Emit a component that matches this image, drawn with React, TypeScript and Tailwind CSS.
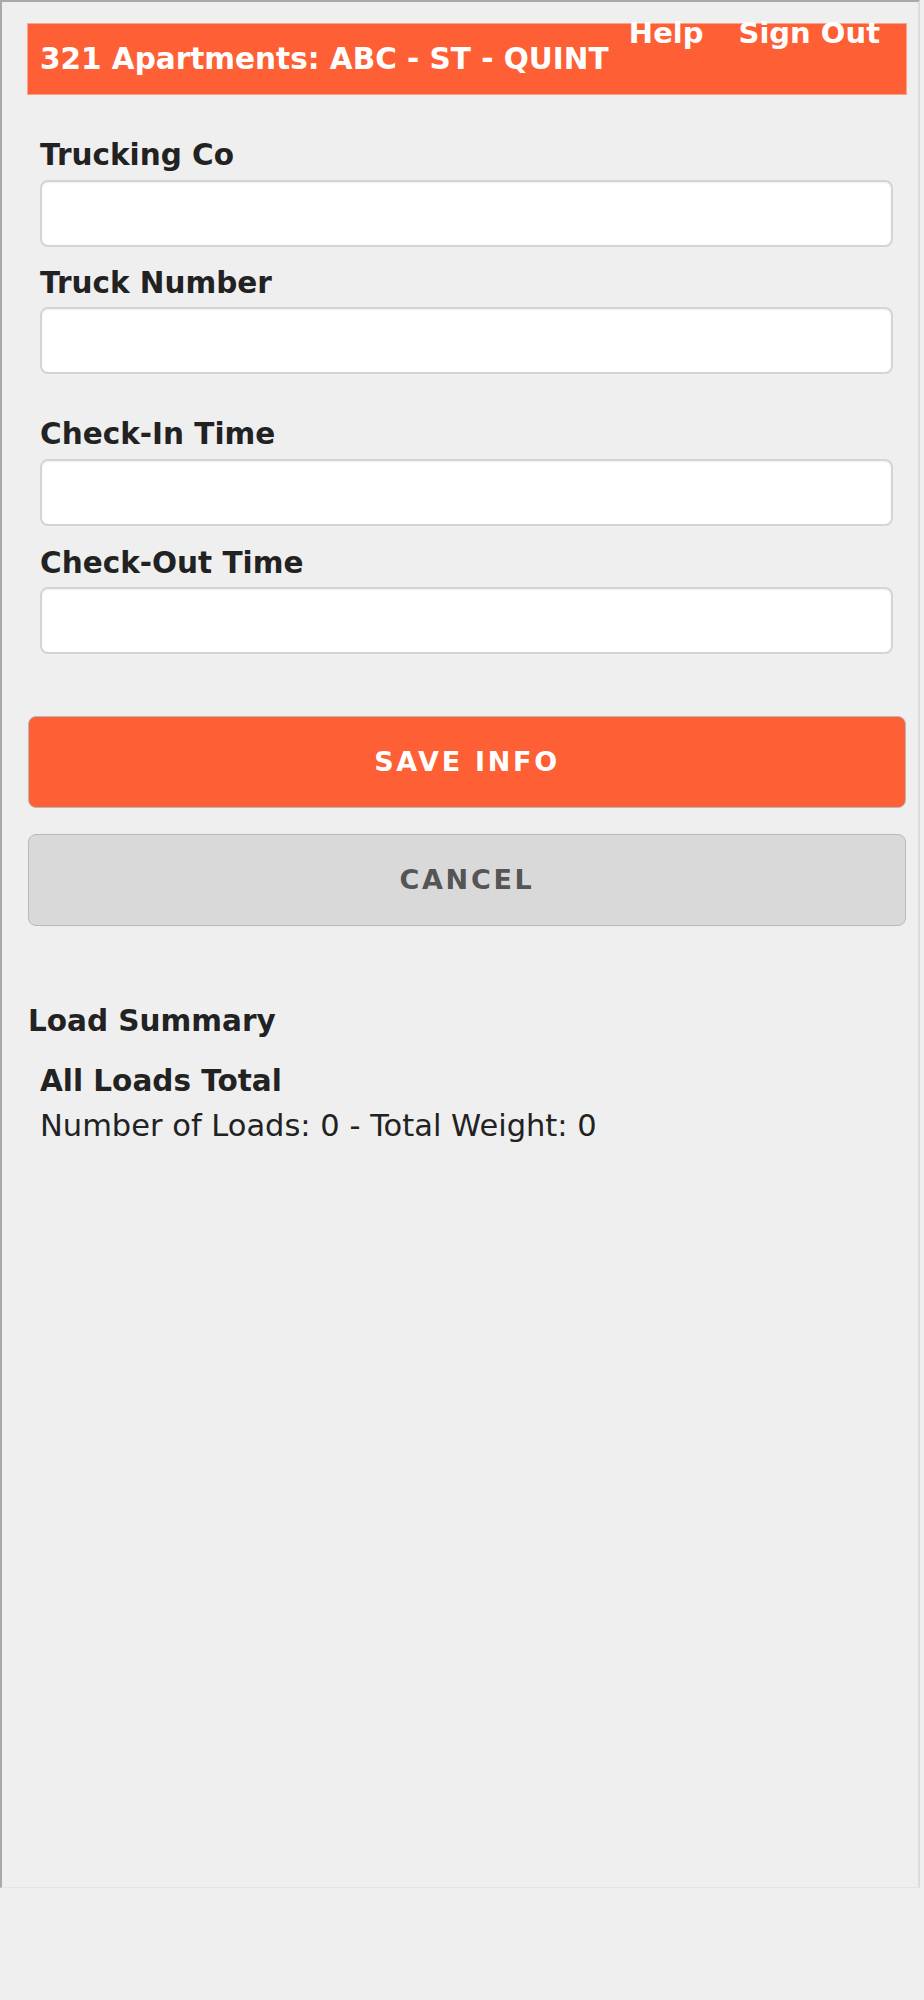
import React from "react";

const font = { fontFamily: '"DejaVu Sans", Verdana, sans-serif' };

function Field({ label, mt }: { label: string; mt: string }) {
  return (
    <div className={`flex flex-col ${mt}`}>
      <div className="text-[29.5px] leading-none font-bold text-[#222222]">{label}</div>
      <div className="mt-[9px] h-[67px] w-[853px] rounded-[8px] border-2 border-[#d4d4d4] bg-white shadow-[inset_0_1px_2px_rgba(0,0,0,0.06)]" />
    </div>
  );
}

export default function App() {
  return (
    <div className="min-h-[2000px] w-[924px] bg-[#efefef]" style={font}>
      <div className="h-[1888px] w-[920px] border-l-2 border-t-2 border-r-2 border-b border-l-[#a9a9a9] border-t-[#a9a9a9] border-r-[#dcdcdc] border-b-[#e4e4e4] bg-[#efefef]">
        <div className="relative ml-[25px] mt-[21px] h-[72px] w-[880px] border border-[#f7a58c] bg-[#ff5f35]">
          <div className="pl-[12px] pt-[21px] text-[29.5px] leading-none font-bold text-white">
            321 Apartments: ABC - ST - QUINT
          </div>
          <div className="absolute right-[26px] top-[-5px] flex gap-[35px] text-[29px] leading-none font-bold text-white">
            <span>Help</span>
            <span>Sign Out</span>
          </div>
        </div>

        <div className="ml-[38px] flex flex-col">
          <Field label="Trucking Co" mt="mt-[46px]" />
          <Field label="Truck Number" mt="mt-[22px]" />
          <Field label="Check-In Time" mt="mt-[46px]" />
          <Field label="Check-Out Time" mt="mt-[23px]" />
        </div>

        <div className="ml-[26px] mt-[62px] flex w-[878px] flex-col">
          <div className="flex h-[92px] items-center justify-center rounded-[8px] border-[1.5px] border-[#b9b9b9] bg-[#ff5f35] text-[27px] font-bold tracking-[2.7px] text-white">
            SAVE INFO
          </div>
          <div className="mt-[26px] flex h-[92px] items-center justify-center rounded-[8px] border-[1.5px] border-[#b9b9b9] bg-[#d9d9d9] text-[27px] font-bold tracking-[2.7px] text-[#555555]">
            CANCEL
          </div>
        </div>

        <div className="ml-[26px] mt-[81px] text-[29.5px] leading-none font-bold text-[#222222]">Load Summary</div>
        <div className="ml-[38px] mt-[30px] text-[29.5px] leading-none font-bold text-[#222222]">All Loads Total</div>
        <div className="ml-[38px] mt-[15px] text-[30.5px] leading-none text-[#222222]">
          Number of Loads: 0 - Total Weight: 0
        </div>
      </div>
    </div>
  );
}
